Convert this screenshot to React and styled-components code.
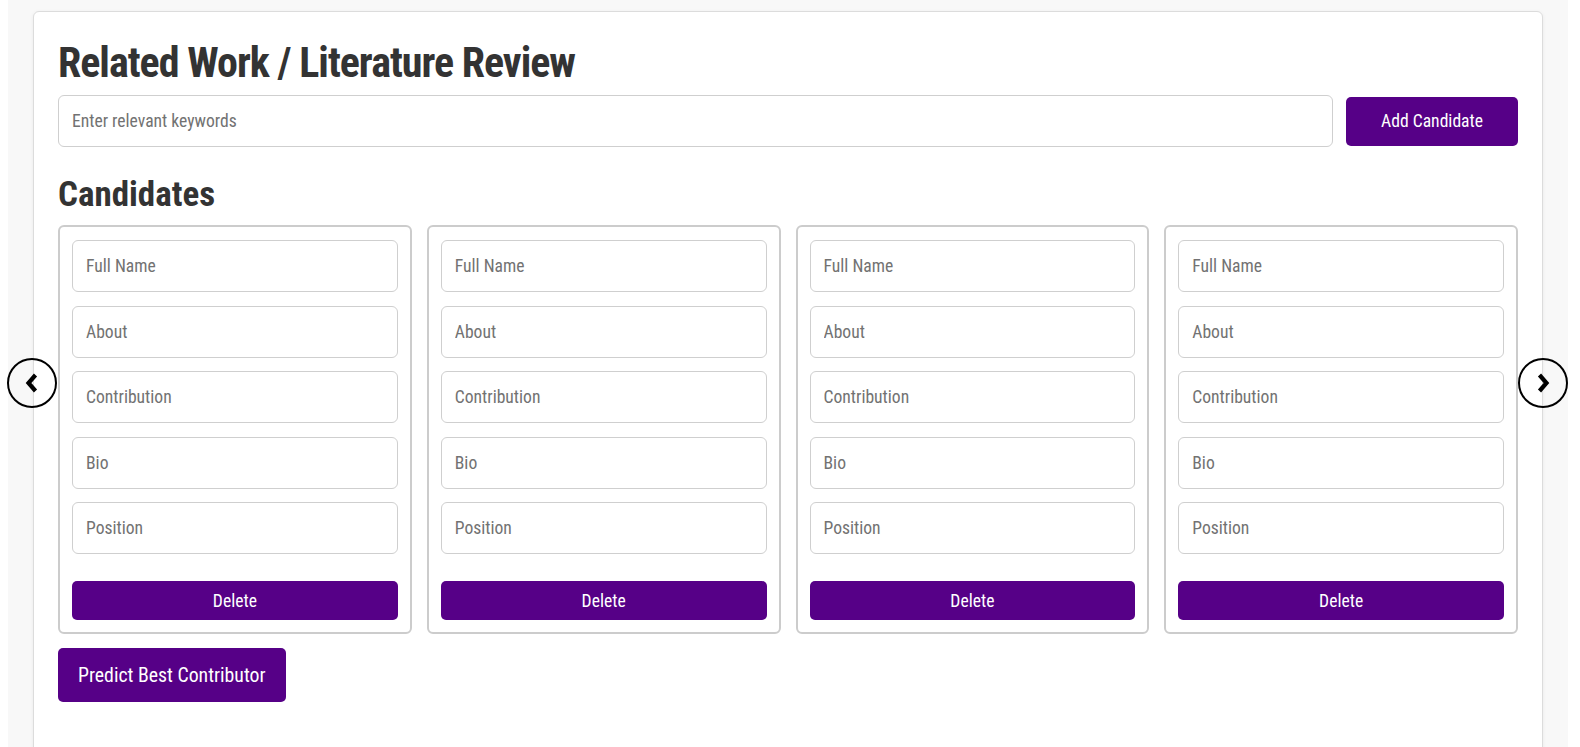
import React, { useState } from 'react';
import styled, { createGlobalStyle } from 'styled-components';

const GlobalStyle = createGlobalStyle`
  html, body {
    margin: 0;
    background: #ffffff;
  }
  body {
    font-family: "Roboto Condensed", Roboto, sans-serif;
    overflow: hidden;
  }
  * {
    box-sizing: border-box;
  }
`;

const StyledPage = styled.div`
  padding: 0 12px 0 8px;
  min-height: 747px;
`;

const StyledBackdrop = styled.div`
  background: #f8f8f8;
  padding: 11px 25px 0 25px;
  min-height: 747px;
`;

const StyledSection = styled.section`
  position: relative;
  background: #ffffff;
  border: 1px solid #dcdcdc;
  border-radius: 6px;
  box-shadow: 0 1px 4px rgba(0, 0, 0, 0.06);
  padding: 26px 24px 60px 24px;
`;

const StyledTitle = styled.h1`
  margin: 0 0 7px 0;
  font-size: 42px;
  line-height: 50px;
  font-weight: 700;
  letter-spacing: -1px;
  color: #333333;
`;

const StyledSubTitle = styled.h2`
  margin: 27px 0 9px 0;
  font-size: 35px;
  line-height: 42px;
  font-weight: 700;
  color: #333333;
`;

const StyledSearchRow = styled.div`
  display: flex;
  align-items: center;
  gap: 13px;
`;

const StyledInput = styled.input`
  display: block;
  width: 100%;
  height: 52px;
  border: 1px solid #cfcfcf;
  border-radius: 6px;
  padding: 0 13px;
  font-family: "Roboto Condensed", Roboto, sans-serif;
  font-size: 17.6px;
  color: #333333;
  background: #ffffff;
  outline: none;

  &::placeholder {
    color: #727272;
  }
`;

const StyledButton = styled.button`
  flex: none;
  border: none;
  border-radius: 5px;
  background: #560087;
  color: #ffffff;
  font-family: "Roboto Condensed", Roboto, sans-serif;
  font-weight: 400;
  font-size: ${(p) => (p.big ? '19.8px' : '17.6px')};
  height: ${(p) => p.h};
  padding: 0 ${(p) => p.px};
  width: ${(p) => (p.block ? '100%' : 'auto')};
  cursor: pointer;
`;

const StyledCarousel = styled.div`
  display: grid;
  grid-template-columns: repeat(4, 1fr);
  gap: 15px;
`;

const StyledCard = styled.div`
  display: flex;
  flex-direction: column;
  border: 2px solid #cccccc;
  border-radius: 6px;
  padding: 13px 12px 12px 12px;
  background: #ffffff;
`;

const StyledFields = styled.div`
  display: flex;
  flex-direction: column;
  gap: 13.5px;
  margin-bottom: 27px;
`;

const StyledArrow = styled.button`
  position: absolute;
  top: 346px;
  ${(p) => (p.side === 'left' ? 'left: -27px;' : 'right: -26px;')}
  width: 50px;
  height: 50px;
  border: 2px solid #000000;
  border-radius: 50%;
  background: transparent;
  display: flex;
  align-items: center;
  justify-content: center;
  padding: 0;
  cursor: pointer;
`;

const StyledFooter = styled.div`
  margin-top: 14px;
`;

const fields = ['Full Name', 'About', 'Contribution', 'Bio', 'Position'];

const Chevron = ({ dir }) => (
  <svg width="14" height="20" viewBox="0 0 14 20">
    <polyline
      points={dir === 'left' ? '10.5,2 3.5,10 10.5,18' : '3.5,2 10.5,10 3.5,18'}
      fill="none"
      stroke="#000"
      strokeWidth="4.2"
      strokeLinejoin="miter"
    />
  </svg>
);

const CandidateCard = ({ onDelete }) => (
  <StyledCard>
    <StyledFields>
      {fields.map((f) => (
        <StyledInput key={f} placeholder={f} />
      ))}
    </StyledFields>
    <StyledButton block h="39px" px="0" onClick={onDelete}>
      Delete
    </StyledButton>
  </StyledCard>
);

const App = () => {
  const [candidates, setCandidates] = useState([1, 2, 3, 4]);

  return (
    <StyledPage>
      <GlobalStyle />
      <StyledBackdrop>
        <StyledSection>
          <StyledTitle>Related Work / Literature Review</StyledTitle>
          <StyledSearchRow>
            <StyledInput placeholder="Enter relevant keywords" />
            <StyledButton h="49px" px="35px">Add Candidate</StyledButton>
          </StyledSearchRow>
          <StyledSubTitle>Candidates</StyledSubTitle>
          <StyledCarousel>
            {candidates.map((c) => (
              <CandidateCard
                key={c}
                onDelete={() => setCandidates((list) => list.filter((x) => x !== c))}
              />
            ))}
          </StyledCarousel>
          <StyledFooter>
            <StyledButton big h="54px" px="20px">Predict Best Contributor</StyledButton>
          </StyledFooter>
          <StyledArrow side="left" aria-label="Previous">
            <Chevron dir="left" />
          </StyledArrow>
          <StyledArrow side="right" aria-label="Next">
            <Chevron dir="right" />
          </StyledArrow>
        </StyledSection>
      </StyledBackdrop>
    </StyledPage>
  );
};

export default App;
